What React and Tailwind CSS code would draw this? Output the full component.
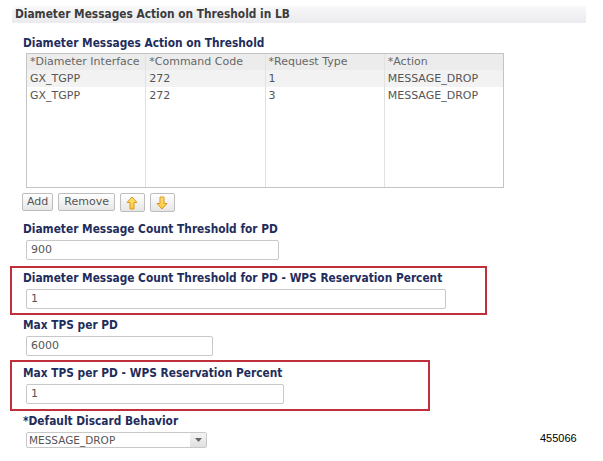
const font = { fontFamily: '"DejaVu Sans", Verdana, sans-serif' };
const bold = { fontFamily: '"DejaVu Sans Condensed", "DejaVu Sans", Verdana, sans-serif' };

const rows = [
  ["GX_TGPP", "272", "1", "MESSAGE_DROP"],
  ["GX_TGPP", "272", "3", "MESSAGE_DROP"],
];

function Label({ children }) {
  return (
    <div className="text-[11.8px] font-bold text-[#1f2d5c] leading-[14px]" style={bold}>
      {children}
    </div>
  );
}

function Input({ value, width }) {
  return (
    <div
      className={`${width} h-[20px] ml-[3px] mt-[4px] border border-[#c8c8c8] rounded-[2px] bg-white px-[4px] text-[11px] leading-[18px] text-[#555]`}
    >
      {value}
    </div>
  );
}

function Arrow({ up }) {
  return (
    <svg width="12" height="14" viewBox="0 0 12 14">
      <defs>
        <linearGradient id={up ? "gu" : "gd"} x1="0" y1="0" x2="0" y2="1">
          <stop offset="0" stopColor="#ffe27a" />
          <stop offset="1" stopColor="#ffc83a" />
        </linearGradient>
      </defs>
      <path
        d={up ? "M6 1 L11 6.5 H8 V13 H4 V6.5 H1 Z" : "M6 13 L11 7.5 H8 V1 H4 V7.5 H1 Z"}
        fill={`url(#${up ? "gu" : "gd"})`}
        stroke="#d99a1e"
        strokeWidth="1"
        strokeLinejoin="round"
      />
    </svg>
  );
}

export default function App() {
  return (
    <div className="w-[603px] h-[461px] bg-white relative overflow-hidden" style={font}>
      {/* section header */}
      <div
        className="mt-[6px] ml-[12px] w-[574px] h-[17px] rounded-tl-[6px] bg-gradient-to-b from-[#f8f8fa] to-[#ebebef] pl-[3px] text-[11.8px] font-bold text-[#3c3c3c] leading-[17px]"
        style={bold}
      >
        Diameter Messages Action on Threshold in LB
      </div>

      <div className="pl-[23px] pt-[13px]">
        <Label>Diameter Messages Action on Threshold</Label>

        {/* table */}
        <div className="ml-[3px] mt-[3px] w-[478px] h-[135px] border border-[#c4c4c4] flex text-[11px] text-[#555] leading-[17px]">
          {[0, 1, 2, 3].map((c) => (
            <div
              key={c}
              className={`flex-1 flex flex-col ${c < 3 ? "border-r border-[#e2e2e2]" : ""}`}
            >
              <div className="h-[16px] bg-[#ececec] pl-[3px] leading-[16px] text-[#666]">
                {["*Diameter Interface", "*Command Code", "*Request Type", "*Action"][c]}
              </div>
              <div className="h-[17px] bg-[#f2f2f2] pl-[3px]">{rows[0][c]}</div>
              <div className="h-[17px] pl-[3px]">{rows[1][c]}</div>
            </div>
          ))}
        </div>

        {/* buttons */}
        <div className="flex gap-[5px] mt-[5px] -ml-[1px] text-[11px] text-[#555]">
          <div className="h-[18px] px-[4px] border border-[#bdbdbd] rounded-[2px] bg-gradient-to-b from-white to-[#e6e6e6] leading-[16px]">
            Add
          </div>
          <div className="h-[18px] px-[5px] border border-[#bdbdbd] rounded-[2px] bg-gradient-to-b from-white to-[#e6e6e6] leading-[16px]">
            Remove
          </div>
          <div className="h-[19px] w-[25px] border border-[#bdbdbd] rounded-[2px] bg-gradient-to-b from-white to-[#e6e6e6] flex items-center justify-center">
            <Arrow up />
          </div>
          <div className="h-[19px] w-[25px] border border-[#bdbdbd] rounded-[2px] bg-gradient-to-b from-white to-[#e6e6e6] flex items-center justify-center">
            <Arrow />
          </div>
        </div>

        <div className="mt-[10px]">
          <Label>Diameter Message Count Threshold for PD</Label>
          <Input value="900" width="w-[253px]" />
        </div>
      </div>

      {/* highlighted box 1 */}
      <div className="ml-[10px] mt-[6px] w-[477px] h-[49px] border-2 border-[#c0303a] pl-[11px] pt-[3px]">
        <Label>Diameter Message Count Threshold for PD - WPS Reservation Percent</Label>
        <Input value="1" width="w-[420px]" />
      </div>

      <div className="pl-[23px] pt-[3px]">
        <Label>Max TPS per PD</Label>
        <Input value="6000" width="w-[187px]" />
      </div>

      {/* highlighted box 2 */}
      <div className="ml-[10px] mt-[4px] w-[420px] h-[51px] border-2 border-[#c0303a] pl-[11px] pt-[4px]">
        <Label>Max TPS per PD - WPS Reservation Percent</Label>
        <Input value="1" width="w-[258px]" />
      </div>

      <div className="pl-[23px] pt-[3px]">
        <Label>*Default Discard Behavior</Label>
        <div className="ml-[3px] mt-[4px] w-[181px] h-[16px] border border-[#c8c8c8] rounded-[2px] bg-white flex text-[10.5px] text-[#555] leading-[14px]">
          <div className="flex-1 pl-[2px]">MESSAGE_DROP</div>
          <div className="w-[16px] bg-gradient-to-b from-[#f4f4f4] to-[#e0e0e0] flex items-center justify-center">
            <svg width="7" height="4" viewBox="0 0 7 4">
              <path d="M0 0 H7 L3.5 4 Z" fill="#666" />
            </svg>
          </div>
        </div>
      </div>

      <div
        className="absolute left-[540px] top-[430px] text-[11px] text-black"
        style={{ fontFamily: '"Liberation Sans", Arial, sans-serif' }}
      >
        455066
      </div>
    </div>
  );
}
